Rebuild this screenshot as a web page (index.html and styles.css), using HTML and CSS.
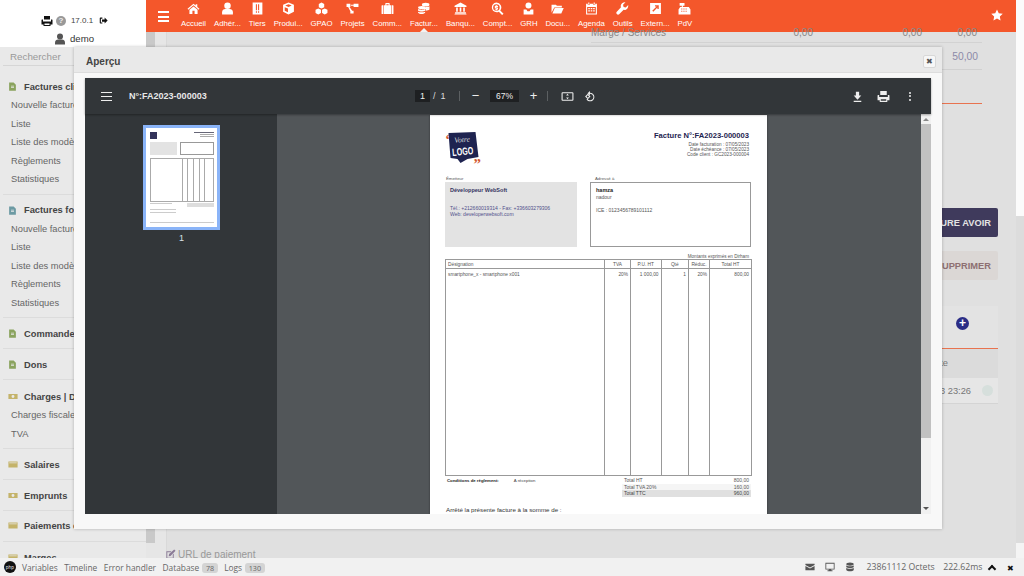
FILE: index.html
```html
<!DOCTYPE html>
<html lang="fr">
<head>
<meta charset="utf-8">
<title>Aperçu</title>
<link rel="stylesheet" href="styles.css">
</head>
<body>
<svg class="defs" aria-hidden="true">
  <symbol id="i-home" viewBox="0 0 24 24"><path d="M12 3 1 12.500l1.400 1.600L12 6l9.600 8.100 1.400-1.600-4-3.400V4h-3v2.600zM4.500 14.500V22H10v-6h4v6h5.500v-7.500L12 8.300z"/></symbol>
  <symbol id="i-user" viewBox="0 0 24 24"><circle cx="12" cy="7" r="6"/><path d="M2 23v-4c0-4 3-6 6-6h8c3 0 6 2 6 6v4z"/></symbol>
  <symbol id="i-tiers" viewBox="0 0 24 24"><path fill-rule="evenodd" d="M3 1h18v22H3zM9 4v11h2V4zm4 0v11h2V4zM9 17v3h2v-3zm4 0v3h2v-3z"/></symbol>
  <symbol id="i-cube" viewBox="0 0 24 24"><path d="M12 1 2 5v13l10 5 10-5V5zm0 3 6 2.400-6 2.600-6-2.600zm-1 8v7l-6-3v-6.500z"/></symbol>
  <symbol id="i-cubes" viewBox="0 0 24 24"><path d="m12 1 5 2.500v6L12 12 7 9.500v-6zM6 12l5 2.500v6L6 23l-5-2.500v-6zm12 0 5 2.500v6L18 23l-5-2.500v-6z"/></symbol>
  <symbol id="i-project" viewBox="0 0 24 24"><path d="M1 3h7v6H6.500l5 7H14v5H8v-4l-4-8H1zm13 0h9v6h-9V7H9V5h5z"/></symbol>
  <symbol id="i-case" viewBox="0 0 24 24"><path fill-rule="evenodd" d="M8 6V3a1 1 0 0 1 1-1h6a1 1 0 0 1 1 1v3h3v16H5V6zm2 0h4V4h-4zM2 6h2v16H2a1 1 0 0 1-1-1V7a1 1 0 0 1 1-1zm18 0h2a1 1 0 0 1 1 1v14a1 1 0 0 1-1 1h-2z"/></symbol>
  <symbol id="i-coins" viewBox="0 0 24 24"><ellipse cx="16" cy="5" rx="7" ry="3.500"/><path d="M9 9c2 1 12 1 14-1v3c-2 2-10 3-14 1zM2 13c3 1.500 10 1.500 13 0v3c-3 2-10 2-13 0zm0 5c3 1.500 10 1.500 13 0v2c-3 3-10 3-13 0zm14-2v-3c3 0 6-.5 7-2v3c-1 1.500-4 2-7 2z"/><ellipse cx="8.500" cy="10" rx="6.500" ry="2.800"/></symbol>
  <symbol id="i-bank" viewBox="0 0 24 24"><path d="M12 1 1 7v2h22V7zM4 10h3v8H4zm6.500 0h3v8h-3zM17 10h3v8h-3zM2 19h20v2H2zm-1 2.500h22V23H1z"/></symbol>
  <symbol id="i-search" viewBox="0 0 24 24"><path fill-rule="evenodd" d="M10 1a9 9 0 0 1 7.100 14.500l6 6-2.600 2.600-6-6A9 9 0 1 1 10 1zm0 3a6 6 0 1 0 0 12 6 6 0 0 0 0-12zm-1 2h2v1h2v2h-3v1h3v4h-2v1H9v-1H7v-2h3v-1H7V7h2z"/></symbol>
  <symbol id="i-hr" viewBox="0 0 24 24"><circle cx="12" cy="6.500" r="5.500"/><path d="M3 14h5l2 3h4l2-3h5v9H3z"/></symbol>
  <symbol id="i-folder" viewBox="0 0 24 24"><path d="M1 20V5h8l2 2h9v3H6l-5 10zm1.500 1L7 11h16.500L19 21z"/></symbol>
  <symbol id="i-cal" viewBox="0 0 24 24"><path fill-rule="evenodd" d="M6 1h2v3H6zm10 0h2v3h-2zM2 3h3v2h4V3h6v2h4V3h3v20H2zm2 6v12h16V9zm2 2h3v2.500H6zm4.500 0h3v2.500h-3zm4.500 0h3v2.500h-3zm-9 4h3v2.500H6zm4.500 0h3v2.500h-3zm4.500 0h3v2.500h-3z"/></symbol>
  <symbol id="i-wrench" viewBox="0 0 24 24"><path d="M22.500 5.500 18 10l-4-1-1-4 4.500-4.500C13 0 9 3 8.700 7c0 1 .2 2 .5 2.700L1.500 18c-1.500 1.500-1 3.200 0 4.300 1.200 1.200 3 1.500 4.300.2l8.300-8c3.800 1.200 9.300-2.500 8.400-9z"/></symbol>
  <symbol id="i-ext" viewBox="0 0 24 24"><path fill-rule="evenodd" d="M2 2h20v20H2zm9 4v2.500h3L6 16l2 2 7.500-8v3H18V6z"/></symbol>
  <symbol id="i-pos" viewBox="0 0 24 24"><path fill-rule="evenodd" d="M3 2h9v5H9v2h11l3 5v9H1v-9l3-5h3V7H3zM6 12v2h2v-2zm4 0v2h2v-2zm4 0v2h2v-2zm-8 4v2h2v-2zm4 0v2h2v-2zm4 0v2h2v-2z"/></symbol>
  <symbol id="i-star" viewBox="0 0 24 24"><path d="m12 1 3.500 7.300 8 1.100-5.800 5.600 1.400 8L12 19.200 4.900 23l1.400-8L.5 9.400l8-1.100z"/></symbol>
  <symbol id="i-print" viewBox="0 0 24 24"><path fill-rule="evenodd" d="M6 2h12v7H6zM2 9h2v4h16V9h2a1 1 0 0 1 1 1v9h-4v3H5v-3H1v-9a1 1 0 0 1 1-1zm5 8v3h10v-3z"/></symbol>
  <symbol id="i-out" viewBox="0 0 24 24"><path d="M9 4H4a2 2 0 0 0-2 2v12a2 2 0 0 0 2 2h5v-3H5V7h4zm6 0 8 8-8 8v-5H8V9h7z"/></symbol>
  <symbol id="i-doc" viewBox="0 0 24 24"><path fill-rule="evenodd" d="M3 1h12l6 6v16H3zm5 9v2h8v-2zm0 4v2h8v-2z"/></symbol>
  <symbol id="i-bill" viewBox="0 0 24 24"><path fill-rule="evenodd" d="M1 6h22v12H1zm11 2.500a3.500 3.500 0 1 0 0 7 3.500 3.500 0 0 0 0-7z"/></symbol>
  <symbol id="i-wallet" viewBox="0 0 24 24"><path d="M1 5h22v14H1zm2 2v2h18V7z"/></symbol>
  <symbol id="i-mail" viewBox="0 0 24 24"><path d="M1 4h22v3l-11 6L1 7zm0 5.500 11 6 11-6V20H1z"/></symbol>
  <symbol id="i-screen" viewBox="0 0 24 24"><path fill-rule="evenodd" d="M1 2h22v16h-8v2h3v2H6v-2h3v-2H1zm2 2v12h18V4z"/></symbol>
  <symbol id="i-db" viewBox="0 0 24 24"><ellipse cx="12" cy="5" rx="9" ry="4"/><path d="M3 8c2 3 16 3 18 0v4c-2 3-16 3-18 0zm0 6c2 3 16 3 18 0v5c-2 4-16 4-18 0z"/></symbol>
  <symbol id="i-edit" viewBox="0 0 24 24"><path d="M3 5h11l-2 2H5v12h12v-7l2-2v11H3zm6 6L20 1l3 3L12 15l-4 1z"/></symbol>
  <symbol id="i-dl" viewBox="0 0 24 24"><path d="M5 20h14v2H5zM9 3h6v7h4l-7 8-7-8h4z"/></symbol>
  <symbol id="i-fit" viewBox="0 0 24 24"><path fill-rule="evenodd" d="M3 4h18a2 2 0 0 1 2 2v12a2 2 0 0 1-2 2H3a2 2 0 0 1-2-2V6a2 2 0 0 1 2-2zm0 2v12h18V6zm9 1 2.500 3h-5zm0 10-2.500-3h5z"/></symbol>
  <symbol id="i-rot" viewBox="0 0 24 24"><path d="M11 2v3a8 8 0 1 1-6.500 12.500l1.700-1.300A6 6 0 1 0 11 7v3L6.500 6zM2 12l5-5 5 5-5 5zm2.800 0L7 14.200 9.200 12 7 9.800z"/></symbol>
</svg>

<div class="app">
  <aside class="side">
    <div class="login">
      <div class="login-row">
        <svg class="ic ic-print"><use href="#i-print"/></svg>
        <span class="help">?</span>
        <span class="ver">17.0.1</span>
        <svg class="ic ic-out"><use href="#i-out"/></svg>
      </div>
      <div class="login-row login-user">
        <svg class="ic ic-user"><use href="#i-user"/></svg>
        <span>demo</span>
      </div>
    </div>
    <nav class="side-menu">
      <div class="search">Rechercher</div>
      <section class="sec">
        <h3 class="sec-h"><svg class="sec-i tint-doc"><use href="#i-doc"/></svg>Factures clients</h3>
        <a class="lnk">Nouvelle facture</a><a class="lnk">Liste</a><a class="lnk">Liste des modèles</a><a class="lnk">Règlements</a><a class="lnk">Statistiques</a>
      </section>
      <section class="sec">
        <h3 class="sec-h"><svg class="sec-i tint-teal"><use href="#i-doc"/></svg>Factures fournisseurs</h3>
        <a class="lnk">Nouvelle facture</a><a class="lnk">Liste</a><a class="lnk">Liste des modèles</a><a class="lnk">Règlements</a><a class="lnk">Statistiques</a>
      </section>
      <section class="sec"><h3 class="sec-h"><svg class="sec-i tint-doc"><use href="#i-doc"/></svg>Commandes</h3></section>
      <section class="sec"><h3 class="sec-h"><svg class="sec-i tint-doc"><use href="#i-doc"/></svg>Dons</h3></section>
      <section class="sec sec-charges">
        <h3 class="sec-h"><svg class="sec-i tint-tan"><use href="#i-bill"/></svg>Charges | Dépenses</h3>
        <a class="lnk">Charges fiscales</a><a class="lnk">TVA</a>
      </section>
      <section class="sec"><h3 class="sec-h"><svg class="sec-i tint-tan"><use href="#i-wallet"/></svg>Salaires</h3></section>
      <section class="sec"><h3 class="sec-h"><svg class="sec-i tint-tan"><use href="#i-bill"/></svg>Emprunts</h3></section>
      <section class="sec sec-pay"><h3 class="sec-h"><svg class="sec-i tint-tan"><use href="#i-wallet"/></svg>Paiements divers</h3></section>
      <section class="sec"><h3 class="sec-h"><svg class="sec-i tint-tan"><use href="#i-wallet"/></svg>Marges</h3></section>
    </nav>
  </aside>

  <main class="main">
    <div class="main-col">
      <header class="bar">
        <span class="burger"><i></i><i></i><i></i></span>
        <a class="tab"><svg><use href="#i-home"/></svg><span>Accueil</span></a>
        <a class="tab"><svg><use href="#i-user"/></svg><span>Adhér...</span></a>
        <a class="tab"><svg><use href="#i-tiers"/></svg><span>Tiers</span></a>
        <a class="tab"><svg><use href="#i-cube"/></svg><span>Produi...</span></a>
        <a class="tab"><svg><use href="#i-cubes"/></svg><span>GPAO</span></a>
        <a class="tab"><svg><use href="#i-project"/></svg><span>Projets</span></a>
        <a class="tab"><svg><use href="#i-case"/></svg><span>Comm...</span></a>
        <a class="tab tab-on"><svg><use href="#i-coins"/></svg><span>Factur...</span></a>
        <a class="tab"><svg><use href="#i-bank"/></svg><span>Banqu...</span></a>
        <a class="tab"><svg><use href="#i-search"/></svg><span>Compt...</span></a>
        <a class="tab"><svg><use href="#i-hr"/></svg><span>GRH</span></a>
        <a class="tab"><svg><use href="#i-folder"/></svg><span>Docu...</span></a>
        <a class="tab"><svg><use href="#i-cal"/></svg><span>Agenda</span></a>
        <a class="tab"><svg><use href="#i-wrench"/></svg><span>Outils</span></a>
        <a class="tab"><svg><use href="#i-ext"/></svg><span>Extern...</span></a>
        <a class="tab"><svg><use href="#i-pos"/></svg><span>PdV</span></a>
        <svg class="bar-star"><use href="#i-star"/></svg>
      </header>
      <div class="content">
        <div class="gutter"><div class="gutter-thumb"></div></div>
        <div class="sheet">
          <div class="row-marge">
            <span class="marge-l">Marge / Services</span><span>0,00</span><span>0,00</span><span>0,00</span>
          </div>
          <div class="row-total"><span>50,00</span></div>
          <div class="line-orange"></div>
          <div class="btn btn-dark">FACTURE AVOIR</div>
          <div class="btn btn-soft">SUPPRIMER</div>
          <div class="card">
            <div class="card-add"><span class="plus">+</span></div>
            <div class="card-head">Date</div>
            <div class="card-row"><span>07/05/2023 23:26</span><i class="dot"></i></div>
          </div>
          <div class="url"><svg><use href="#i-edit"/></svg>URL de paiement</div>
        </div>
      </div>
    </div>
    <div class="page-scroll"><div class="ps-top"></div><div class="ps-mid"></div><div class="ps-end"></div></div>
  </main>
</div>

<div class="modal">
  <div class="modal-title"><span>Aperçu</span><button class="modal-x">✖</button></div>
  <div class="viewer">
    <div class="vt">
      <span class="burger vt-burger"><i></i><i></i><i></i></span>
      <span class="vt-name">N°:FA2023-000003</span>
      <div class="vt-center">
        <span class="vt-box vt-page">1</span><span class="vt-of">/&nbsp;&nbsp;1</span>
        <span class="vt-sep"></span>
        <span class="vt-pm">−</span>
        <span class="vt-box vt-zoom">67%</span>
        <span class="vt-pm">+</span>
        <span class="vt-sep"></span>
        <svg class="vt-i vt-fit"><use href="#i-fit"/></svg>
        <svg class="vt-i vt-rot"><use href="#i-rot"/></svg>
      </div>
      <div class="vt-right">
        <svg class="vt-i"><use href="#i-dl"/></svg>
        <svg class="vt-i"><use href="#i-print"/></svg>
        <span class="vt-more"><i></i><i></i><i></i></span>
      </div>
    </div>
    <div class="vb">
      <div class="thumbs">
        <div class="thumb">
          <div class="t-head"><i class="t-logo"></i><div class="t-meta"><i></i><i></i><i></i></div></div>
          <div class="t-boxes"><i class="t-a"></i><i class="t-b"></i></div>
          <div class="t-table"><i></i><i></i><i></i><i></i><i></i></div>
          <div class="t-foot"><i></i><i></i></div>
          <div class="t-note"></div>
          <div class="t-note"></div>
          <div class="t-bottom"></div>
        </div>
        <div class="thumb-n">1</div>
      </div>
      <div class="stage">
        <div class="inv">
          <div class="inv-head">
            <svg class="logo" viewBox="0 0 36 34">
              <text class="logo-q" x="0" y="13">“</text>
              <path class="logo-bg" d="M3 2 30 1l3 25-11 2-7 4-3-4-7-1z"/>
              <text class="logo-v" x="9" y="11" transform="rotate(-5 18 11)">Votre</text>
              <text class="logo-l" x="7" y="24" textLength="21" lengthAdjust="spacingAndGlyphs" transform="rotate(-5 18 24)">LOGO</text>
              <text class="logo-q" x="28" y="38">”</text>
            </svg>
            <div class="inv-meta">
              <h1 class="inv-title">Facture N°:FA2023-000003</h1>
              <p>Date facturation : 07/05/2023</p>
              <p>Date échéance : 07/05/2023</p>
              <p>Code client : GC2023-000004</p>
            </div>
          </div>
          <div class="inv-parties">
            <div class="party-a">
              <div class="party-l">Émetteur</div>
              <div class="box-a">
                <strong>Développeur WebSoft</strong>
                <p class="gap">Tél.: +212660019314 - Fax: +336603279306</p>
                <p>Web: developerwebsoft.com</p>
              </div>
            </div>
            <div class="party-b">
              <div class="party-l">Adressé à</div>
              <div class="box-b">
                <strong>hamza</strong>
                <p>nadour</p>
                <p class="gap2">ICE : 0123456789101112</p>
              </div>
            </div>
          </div>
          <div class="inv-cur">Montants exprimés en Dirham</div>
          <table class="lines">
            <colgroup><col class="c1"><col class="c2"><col class="c3"><col class="c4"><col class="c5"><col class="c6"></colgroup>
            <thead><tr><th class="tl">Désignation</th><th>TVA</th><th>P.U. HT</th><th>Qté</th><th>Réduc.</th><th>Total HT</th></tr></thead>
            <tbody><tr><td class="tl">smartphone_x - smartphone x001</td><td>20%</td><td>1 000,00</td><td>1</td><td>20%</td><td>800,00</td></tr></tbody>
          </table>
          <div class="inv-sum">
            <div class="terms"><b>Conditions de règlement:</b><span>A réception</span></div>
            <div class="totals">
              <div><span>Total HT</span><span>800,00</span></div>
              <div class="tot-2"><span>Total TVA 20%</span><span>160,00</span></div>
              <div class="tot-3"><span>Total TTC</span><span>960,00</span></div>
            </div>
          </div>
          <p class="inv-words">Arrêté la présente facture à la somme de :</p>
        </div>
        <div class="vscroll"><span class="up"></span><div class="thumbbar"></div><span class="down"></span></div>
      </div>
    </div>
  </div>
</div>

<footer class="dbg">
  <span class="dbg-logo">php</span>
  <span>Variables</span><span>Timeline</span><span>Error handler</span>
  <span>Database <em>78</em></span><span>Logs <em>130</em></span>
  <div class="dbg-right">
    <svg><use href="#i-mail"/></svg><svg><use href="#i-screen"/></svg><svg><use href="#i-db"/></svg>
    <span class="d-oct">23861112 Octets</span><span class="d-ms">222.62ms</span>
    <span class="d-up"></span><span class="d-x">✖</span>
  </div>
</footer>
</body>
</html>
```
FILE: styles.css
```css
* { box-sizing: border-box; }
html, body { margin: 0; height: 100%; overflow: hidden; }
body { width: 1024px; height: 576px; position: relative; background: #dfdfdf; font-family: "Liberation Sans", Arial, sans-serif; color: #666; }
p, h1, h3 { margin: 0; font-weight: normal; }
.defs { position: absolute; width: 0; height: 0; }
svg { fill: currentColor; display: block; }

.app { display: flex; height: 576px; }
.side { width: 146px; flex: none; display: flex; flex-direction: column; background: #e9e9e9; overflow: hidden; }
.login { height: 47px; flex: none; background: #fff; display: flex; flex-direction: column; align-items: center; padding-top: 14px; color: #333; font-size: 8px; padding-left: 3px; }
.login-row { display: flex; align-items: center; gap: 3px; height: 13px; }
.ic-print { width: 12px; height: 12px; color: #111; }
.ic-out { width: 9px; height: 9px; color: #111; margin-left: 1px; }
.help { width: 10px; height: 10px; border-radius: 50%; background: #999; color: #eee; font: bold 8px/10px "Liberation Sans", sans-serif; text-align: center; }
.ver { margin: 0 2px; color: #444; }
.login-user { margin-top: 5px; font-size: 9.600px; gap: 4px; color: #333; padding-right: 1px; }
.ic-user { width: 12px; height: 12px; color: #555; }

.side-menu { flex: 1; min-height: 0; padding-left: 3px; overflow: hidden; }
.search { color: #999; font-size: 9.800px; height: 18px; margin-top: 1px; line-height: 17px; border-bottom: 1px solid #d6d6d6; padding-left: 7px; width: 71px; }
.sec { border-bottom: 1px solid #dcdcdc; padding: 6px 0 5px; white-space: nowrap; }
.search + .sec { padding-top: 11px; }
.sec-charges { padding-top: 7px; }
.sec-pay { padding-top: 5px; padding-bottom: 6px; }
.sec-h { display: flex; align-items: center; height: 19px; font-size: 9.300px; font-weight: bold; color: #444; padding-left: 5px; }
.sec-i { width: 9px; height: 11px; margin-right: 7px; flex: none; }
.tint-doc { color: #8aa35e; }
.tint-teal { color: #6c9aa3; }
.tint-tan { color: #c4b36a; width: 10px; margin-right: 6px; }
.lnk { display: block; font-size: 9.300px; line-height: 18.500px; color: #666; padding-left: 8px; }

.main { flex: 1; display: flex; min-width: 0; }
.main-col { flex: 1; min-width: 0; display: flex; flex-direction: column; }
.page-scroll { width: 8px; display: flex; flex-direction: column; }
.ps-top { height: 216px; background: #fbfbfb; }
.ps-mid { height: 327px; background: #dcdcdc; }
.ps-end { flex: 1; background: #f4f4f4; }

.bar { height: 32px; background: #f4572b; color: #fff; display: flex; align-items: flex-start; position: relative; padding-left: 12px; flex: none; }
.burger { display: flex; flex-direction: column; gap: 2.500px; width: 11px; margin-top: 11px; margin-right: 8px; }
.burger i { height: 2px; background: #fff; display: block; }
.tab { display: flex; flex-direction: column; align-items: center; padding: 1px 3.950px 0; position: relative; font-size: 7.800px; line-height: 10px; white-space: nowrap; }
.tab svg { width: 13px; height: 13px; margin: 1px 0 4px; }
.tab-on::after { content: ""; position: absolute; left: 50%; margin-left: -4px; bottom: -3px; border: 4px solid transparent; border-bottom-color: #f3f3f3; }
.bar-star { position: absolute; right: 13px; top: 9px; width: 12px; height: 12px; }

.content { flex: 1; display: flex; min-height: 0; background: #e6e6e6; }
.gutter { width: 9px; background: #e6e6e6; }
.gutter-thumb { height: 511px; background: #c9c9c9; }
.sheet { flex: 1; display: flex; flex-direction: column; align-items: flex-end; position: relative; padding-right: 18px; margin-left: 11px; border-left: 1px solid #d9d9d9; background: #e0e0e0; }
.row-marge { display: flex; width: 391px; height: 11px; margin-right: 16px; font-size: 10px; line-height: 2px; color: #888; align-items: flex-start; border-bottom: 1px solid #d2d2d2; }
.row-marge span { width: 55px; text-align: right; }
.row-marge span:nth-child(3) { width: 109px; }
.row-marge .marge-l { width: 167px; text-align: left; }
.row-total { width: 391px; height: 23px; margin: 4px 16px 0 0; border-bottom: 1px solid #d0d0d0; text-align: right; color: #8c8aa8; font-size: 10.300px; line-height: 20px; padding-right: 4px; }
.line-orange { width: 40px; height: 1px; background: #e8734f; margin: 33px 16px 0 0; }
.btn { width: 90px; height: 29px; margin-top: 104px; border-radius: 2px; font-size: 9.300px; font-weight: bold; line-height: 30px; text-align: right; padding-right: 7px; white-space: nowrap; }
.btn-dark { background: #3f3a5c; color: #e3e3e3; }
.btn-soft { margin-top: 14px; background: #dbd7d5; color: #8d6f72; }
.card { width: 90px; margin-top: 26px; }
.card-add { height: 42px; background: #e3e3e3; display: flex; justify-content: flex-end; align-items: center; padding: 0 29px 8px 0; }
.plus { width: 13px; height: 13px; border-radius: 50%; background: #2b2d86; color: #fff; font: bold 12px/13px "Liberation Sans", sans-serif; text-align: center; }
.card-head { height: 30px; border-top: 1px solid #e8734f; background: #dbdbdb; font-size: 9.300px; line-height: 28px; text-align: right; padding-right: 50px; color: #777; }
.card-row { height: 26px; background: #e6e6e6; border-bottom: 1px solid #d4d4d4; font-size: 9.300px; display: flex; justify-content: flex-end; align-items: center; gap: 11px; padding-right: 5px; color: #777; white-space: nowrap; }
.card-row span { flex: none; }
.dot { width: 11px; height: 11px; border-radius: 50%; background: #d6dfdc; display: block; flex: none; }
.url { position: absolute; left: -2px; top: 517px; display: flex; align-items: center; gap: 2px; font-size: 10px; color: #999; }
.url svg { width: 11px; height: 11px; color: #8a7a96; }

.modal { position: absolute; left: 74px; top: 47px; width: 868px; height: 482px; background: #f8f8f8; box-shadow: 0 0 3px rgba(0,0,0,.25); padding: 0 11px; }
.modal-title { height: 26px; margin: 0 -11px; background: #e9e9e9; border-bottom: 1px solid #ddd; display: flex; align-items: center; justify-content: space-between; padding: 3px 6px 0 12px; font-size: 10px; font-weight: bold; color: #444; }
.modal-x { width: 13px; height: 13px; padding: 0; border: 1px solid #d8d8d8; border-radius: 2px; background: #f7f7f7; color: #555; font-size: 8px; line-height: 11px; }
.viewer { margin-top: 5px; height: 436px; display: flex; flex-direction: column; background: #525659; }
.vt { height: 36px; flex: none; background: #323639; color: #f1f1f1; display: flex; align-items: center; position: relative; box-shadow: 0 1px 2px rgba(0,0,0,.35); z-index: 1; }
.vt-burger { margin: 0 0 0 16px; width: 11px; gap: 3px; }
.vt-burger i { height: 1px; background: #eee; }
.vt-name { font-size: 9px; font-weight: bold; margin-left: 17px; color: #e8e8e8; }
.vt-center { position: absolute; left: 330px; top: 0; height: 36px; display: flex; align-items: center; font-size: 9px; }
.vt-box { background: #1e2022; height: 12px; line-height: 12px; text-align: center; color: #eee; }
.vt-page { width: 15px; }
.vt-of { margin: 0 0 0 3px; color: #ddd; width: 24px; }
.vt-sep { width: 1px; height: 10px; background: #5c6062; margin: 0 9px 0 2px; }
.vt-pm { width: 13px; text-align: center; font-size: 13px; line-height: 12px; color: #eee; }
.vt-zoom { width: 29px; margin: 0 8px; font-size: 8.500px; }
.vt-pm + .vt-sep { margin-left: 7px; margin-right: 13px; }
.vt-i { width: 13px; height: 13px; color: #eee; }
.vt-rot { margin-left: 10px; }
.vt-right { position: absolute; right: 15px; top: 0; height: 36px; display: flex; align-items: center; gap: 13px; }
.vt-more { display: flex; flex-direction: column; gap: 1.500px; width: 13px; align-items: center; }
.vt-more i { width: 2px; height: 2px; background: #eee; border-radius: 50%; }

.vb { flex: 1; min-height: 0; display: flex; }
.thumbs { width: 192px; flex: none; background: #323639; padding: 11px 0 0 58px; }
.thumb { width: 77px; height: 105px; border: 3px solid #8ab4f8; background: #fff; padding: 4px 3px 0 4px; display: flex; flex-direction: column; filter: blur(.4px); }
.t-head { display: flex; justify-content: space-between; height: 9px; }
.t-logo { width: 7px; height: 7px; background: #33335a; }
.t-meta { width: 20px; display: flex; flex-direction: column; align-items: flex-end; gap: 1px; }
.t-meta i { height: 1px; width: 14px; background: #aaa; }
.t-meta i:first-child { width: 20px; background: #667; }
.t-boxes { display: flex; justify-content: space-between; height: 13px; margin-top: 1px; }
.t-a { width: 27px; background: #e3e3e3; }
.t-b { width: 34px; border: 1px solid #999; }
.t-table { height: 44px; margin-top: 3px; border: 1px solid #aaa; display: flex; justify-content: flex-end; }
.t-table i { width: 6px; border-left: 1px solid #aaa; }
.t-table i:first-child, .t-table i:nth-child(4) { width: 5px; }
.t-table i:last-child { width: 9px; }
.t-foot { display: flex; justify-content: space-between; margin-top: 1px; height: 4px; }
.t-foot i:first-child { width: 22px; height: 1px; background: #ccc; }
.t-foot i:last-child { width: 27px; background: #ddd; }
.t-note { height: 1px; width: 26px; background: #ccc; margin-top: 2px; }
.t-bottom { height: 1px; background: #ccc; margin-top: 9px; }
.thumb-n { width: 77px; text-align: center; color: #d8e0e8; font-size: 9px; margin-top: 3px; }

.stage { flex: 1; position: relative; min-width: 0; display: flex; justify-content: flex-end; overflow: hidden; }
.inv { width: 337px; margin-right: 164px; margin-top: 1px; background: #fff; padding: 16px 16px 0 15px; color: #555; font-size: 4.700px; overflow: hidden; height: 400px; box-shadow: 0 0 2px rgba(0,0,0,.4); }
.inv-head { display: flex; justify-content: space-between; height: 45px; }
.logo { width: 37px; height: 34px; overflow: visible; }
.logo-bg { fill: #1e2350; }
.logo-q { fill: #d2562d; font: bold 15px "Liberation Serif", serif; }
.logo-v { fill: #ddd; font: italic 7.500px "Liberation Serif", serif; }
.logo-l { fill: #fff; font: bold 10.500px "Liberation Sans", sans-serif; }
.inv-meta { text-align: right; margin-right: 2px; line-height: 4.800px; }
.inv-title { font-size: 7.600px; font-weight: bold; color: #1e2350; line-height: 9px; margin-bottom: 3px; }
.inv-parties { display: flex; justify-content: space-between; height: 72px; }
.party-l { height: 6px; line-height: 6px; font-size: 4.300px; padding-left: 1px; }
.party-a { width: 132px; }
.party-b { width: 161px; }
.party-b .party-l { padding-left: 5px; }
.box-a { height: 65px; background: #e3e3e3; padding: 5px 5px; color: #50508a; font-size: 5.050px; line-height: 6px; }
.box-a strong { color: #33335f; font-size: 5.500px; }
.box-b { height: 65px; border: 1px solid #999; padding: 4px 5px; font-size: 5px; line-height: 6.500px; color: #555; }
.box-b strong { color: #222; font-size: 5.500px; }
.gap { margin-top: 12px; }
.gap2 { margin-top: 6.500px; }
.inv-cur { text-align: right; height: 5px; line-height: 5px; margin-top: 6px; padding-right: 2px; font-size: 4.600px; }
.lines { width: 306px; height: 217px; border-collapse: collapse; table-layout: fixed; font-size: 4.800px; color: #555; }
.c1 { width: 159px; } .c2 { width: 26px; } .c3 { width: 30.500px; } .c4 { width: 27.500px; } .c5 { width: 21px; } .c6 { width: 42px; }
.lines th { height: 9px; font-weight: normal; border: 1px solid #999; padding: 0; text-align: center; }
.lines td { border: 1px solid #999; border-top: 0; padding: 3px 2px 0; text-align: right; vertical-align: top; }
.lines .tl { text-align: left; padding-left: 2px; }
.inv-sum { display: flex; justify-content: space-between; margin-top: 1px; }
.terms { font-size: 4.300px; padding: 1px 0 0 2px; color: #444; }
.terms b { color: #222; margin-right: 15px; }
.totals { width: 129px; font-size: 5px; color: #555; }
.totals div { display: flex; justify-content: space-between; height: 6.500px; line-height: 6.500px; padding: 0 2px; }
.totals .tot-2 { background: #f5f5f5; }
.totals .tot-3 { background: #e0e0e0; color: #444; }
.inv-words { margin: 9px 0 0 1px; font-size: 6.200px; color: #333; }

.vscroll { position: absolute; right: 0; top: 0; bottom: 0; width: 10px; background: #f1f1f1; display: flex; flex-direction: column; align-items: center; }
.thumbbar { width: 100%; height: 314px; background: #c1c1c1; }
.up { width: 0; height: 0; flex: none; border: 3px solid transparent; border-bottom: 3px solid #888; border-top: 0; margin: 4px 0 3px; }
.down { width: 0; height: 0; border: 3px solid transparent; border-top: 3px solid #555; border-bottom: 0; margin-top: auto; margin-bottom: 4px; }

.dbg { position: absolute; left: 0; right: 0; bottom: 0; height: 18px; background: #f1f1f1; display: flex; align-items: center; gap: 6.500px; font: 8.350px "Open Sans", sans-serif; color: #666; padding-left: 4px; }
.dbg em { font-style: normal; background: #d4d4d4; border-radius: 3px; padding: 0 3.500px; font-size: 7.200px; margin-left: 1px; }
.dbg-logo { width: 12px; height: 12px; border-radius: 50%; background: #111; color: #fff; font-size: 4.500px; line-height: 12px; text-align: center; margin-right: -.5px; }
.dbg-right { margin-left: auto; display: flex; align-items: center; gap: 10px; padding-right: 10px; font-size: 8.700px; }
.dbg-right svg { width: 10px; height: 10px; color: #555; }
.d-oct { margin-left: 2px; }
.d-ms { margin-left: -1.500px; }
.d-up { width: 6px; height: 6px; border-left: 2px solid #111; border-top: 2px solid #111; transform: rotate(45deg); margin: 3px 0 0 -3.500px; }
.d-x { color: #111; font-size: 8px; margin-left: 2px; }
```
